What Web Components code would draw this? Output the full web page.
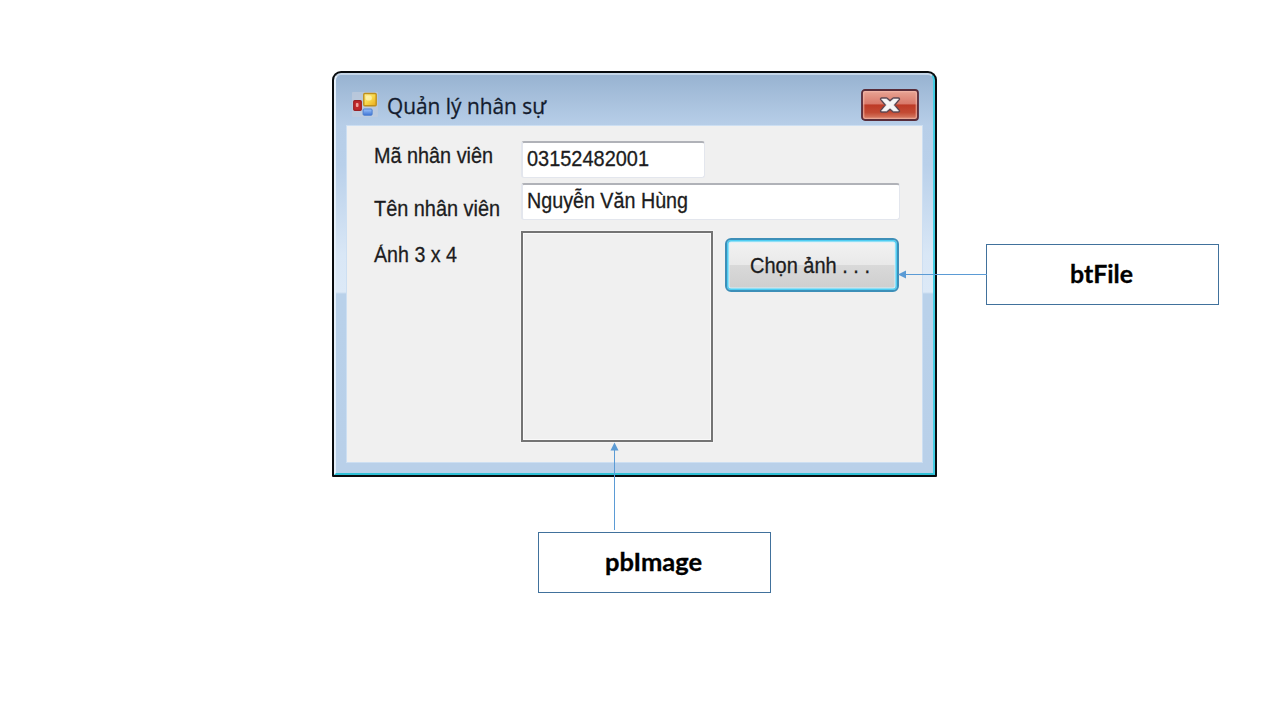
<!DOCTYPE html>
<html lang="vi">
<head>
<meta charset="utf-8">
<title>Quản lý nhân sự</title>
<style>
html,body{margin:0;width:1280px;height:720px;overflow:hidden;background:#fff}
body{font-family:"Liberation Sans",Arial,sans-serif;color:#1c1c20}
</style>
</head>
<body>
<annotated-slide></annotated-slide>
<script>
const define = (name, html, ready) => customElements.define(name, class extends HTMLElement {
  connectedCallback() {
    if (!this.shadowRoot) {
      const t = document.createElement('template');
      t.innerHTML = html;
      this.attachShadow({mode: 'open'}).append(t.content.cloneNode(true));
    }
    if (ready) ready(this);
  }
});

// One line of text, condensed or widened to the width given in "w".
define('fit-text', `
<style>
:host{display:block;height:26px;line-height:26px;white-space:nowrap;font-size:22px;-webkit-text-stroke:.3px currentColor}
:host([clip]){clip-path:inset(2.5px -4px 0 -4px)}
span{display:inline-block;transform-origin:0 50%}
</style><span><slot></slot></span>`, el => {
  const w = +el.getAttribute('w');
  el.style.width = w + 'px';
  const s = el.shadowRoot.querySelector('span');
  s.style.transform = 'scaleX(' + w / s.getBoundingClientRect().width + ')';
});

define('form-icon', `
<style>:host{display:block;width:26px;height:25px}svg{display:block}</style>
<svg width="26" height="25" viewBox="0 0 26 25">
<defs>
<linearGradient id="y" x2="1" y2="1"><stop stop-color="#fff3a0"/><stop offset=".5" stop-color="#f8d84a"/><stop offset="1" stop-color="#e9a81c"/></linearGradient>
<linearGradient id="b" x2="0" y2="1"><stop stop-color="#9cc4fa"/><stop offset="1" stop-color="#3f74d6"/></linearGradient>
</defs>
<rect width="26" height="25" rx="1" fill="#c3cddb" opacity=".65"/>
<rect x="1.700" y="8.700" width="7.600" height="9.600" rx="1" fill="#c0282b" stroke="#9a2024" stroke-width="1.2"/>
<rect x="3.900" y="11" width="2.600" height="4" rx="1" fill="#f0a39c"/>
<rect x="11.800" y="1.500" width="12.400" height="12.200" rx="1" fill="url(#y)" stroke="#c0901a" stroke-width="1.4"/>
<rect x="13.800" y="3.400" width="6" height="5" rx="2" fill="#fff6bd" opacity=".7"/>
<rect x="11.100" y="17" width="9" height="6.200" rx="1" fill="url(#b)" stroke="#4b7fd0" stroke-width="1"/>
</svg>`);

define('close-button', `
<style>:host{display:block;width:58px;height:32px}svg{display:block}</style>
<svg width="58" height="32" viewBox="0 0 58 32">
<defs><linearGradient id="r" x2="0" y2="1"><stop stop-color="#e9a797"/><stop offset=".46" stop-color="#d9796a"/><stop offset=".5" stop-color="#bd3a26"/><stop offset=".75" stop-color="#c34a34"/><stop offset="1" stop-color="#dc8a72"/></linearGradient></defs>
<rect x="1" y="1" width="56" height="30" rx="3" fill="url(#r)" stroke="#582c39" stroke-width="1.8"/>
<rect x="2.700" y="2.700" width="52.600" height="26.600" rx="1.500" fill="none" stroke="#f2b8aa" stroke-opacity=".7" stroke-width="1.300"/>
<path d="M20.500 10h5l3.500 3 3.500-3h5l-5 6 5 6h-5l-3.500-3-3.500 3h-5l5-6z" fill="#f5f4f5" stroke="#5b4752" stroke-width="3.400" stroke-linejoin="round"/>
<path d="M20.500 10h5l3.500 3 3.500-3h5l-5 6 5 6h-5l-3.500-3-3.500 3h-5l5-6z" fill="#f5f4f5" stroke="#f5f4f5" stroke-width=".6" stroke-linejoin="round"/>
</svg>`);

define('text-field', `
<style>
:host{display:flex;box-sizing:border-box;height:37px;margin-top:1px;padding:3px 0 0 4px;background:#fff;border:1.5px solid #e3e6ed;border-left-width:2px;border-top:2px solid #b0b2b8;border-radius:3px}
</style><slot></slot>`);

define('picture-box', `
<style>
:host{display:block;box-sizing:border-box;width:192px;height:211px;border:2px solid #747474;background:#f0f0f0;box-shadow:inset 0 0 0 1px #fafafa,0 0 0 1px #f5f5f5}
</style>`);

define('push-button', `
<style>
:host{display:flex;box-sizing:border-box;width:174px;height:54px;padding:13px 0 0 23px;border:2px solid #3d8fb8;border-radius:6px;box-shadow:inset 0 0 0 1.500px #4fcdf2,inset 0 0 0 2.500px #d3f0f9;background:linear-gradient(#f3f3f3 0,#e9e9e9 49%,#d9d9d9 51%,#cecece 100%)}
</style><slot></slot>`);

define('form-window', `
<style>
:host{display:flex;flex-direction:column;box-sizing:border-box;width:605px;height:406px;padding:2px;background:#080b0e;border-radius:9px 9px 1px 1px}
.frame{flex:1;display:flex;flex-direction:column;box-sizing:border-box;border:2px solid #e6f0fa;border-top-color:#c5d6e8;border-right-color:#42cde2;border-bottom-color:#2fc0d6;border-radius:7px 7px 0 0;padding:0 11px 11px;
background:linear-gradient(#98b3d1 0,#b7cee8 50px,#b9d0ea 90px,#d9e7f6 180px,#dce9f7 217px,#b9d1ea 219px,#b9d0e9 100%)}
header{display:flex;height:51px;align-items:center}
header form-icon{margin:8px 0 0 5px}
header fit-text{margin:9px 0 0 9px;font-family:"Open Sans","Noto Sans",sans-serif;color:#141c2e}
close-button{margin:9px 3px 0 auto}
main{flex:1;min-height:0;box-sizing:border-box;background:#f0f0f0;box-shadow:0 0 0 1px #cddff2;display:grid;grid-template-columns:147px 379px;grid-template-rows:38px 38px 211px;row-gap:4px;padding:14px 0 0 27px}
text-field.code{width:184px}
.media{display:flex;gap:12px;margin-top:7px}
push-button{margin-top:7px}
</style>
<div class="frame">
<header><form-icon></form-icon><fit-text w="159">Quản lý nhân sự</fit-text><close-button></close-button></header>
<main>
<fit-text w="119" style="margin-top:3px">Mã nhân viên</fit-text>
<text-field class="code"><fit-text w="122">03152482001</fit-text></text-field>
<fit-text w="126" style="margin-top:14px">Tên nhân viên</fit-text>
<text-field><fit-text w="161">Nguyễn Văn Hùng</fit-text></text-field>
<fit-text clip w="83" style="margin-top:18px">Ảnh 3 x 4</fit-text>
<div class="media"><picture-box></picture-box><push-button><fit-text w="120">Chọn ảnh . . .</fit-text></push-button></div>
</main>
</div>`);

define('callout-box', `
<style>
:host{display:flex;align-items:center;justify-content:center;box-sizing:border-box;width:233px;height:61px;padding:0 2px 2px 0;border:1px solid #41719c;background:#fff;color:#000;font-family:Lato,"Open Sans",sans-serif;font-weight:700}
::slotted(fit-text){font-size:24px}
</style><slot></slot>`);

define('annotated-slide', `
<style>
:host{display:block;position:relative;width:1280px;height:720px;background:#fff}
form-window,callout-box,svg{position:absolute}
form-window{left:332px;top:71px}
.file{left:986px;top:244px}
.image{left:538px;top:532px}
svg{left:0;top:0}
</style>
<form-window></form-window>
<callout-box class="file"><fit-text w="63">btFile</fit-text></callout-box>
<callout-box class="image"><fit-text w="97">pbImage</fit-text></callout-box>
<svg width="1280" height="720" viewBox="0 0 1280 720" fill="#5b9bd5" stroke="none">
<path d="M905 274h82v1h-82zM898 274.500l8-4v8z"/>
<path d="M614 450h1v80h-1zM614.500 442.500l4 8h-8z"/>
</svg>`);
</script>
</body>
</html>
